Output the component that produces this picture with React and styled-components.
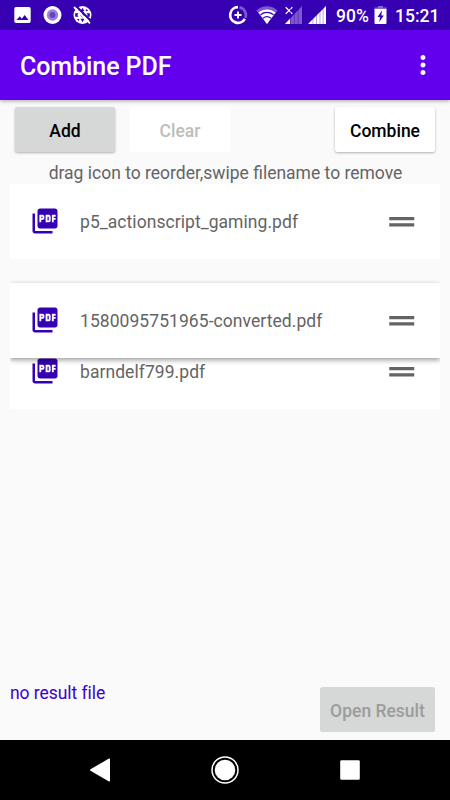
import React from 'react';
import styled, { createGlobalStyle } from 'styled-components';
import { MdPictureAsPdf, MdDragHandle, MdMoreVert } from 'react-icons/md';

const files = [
    { name: 'p5_actionscript_gaming.pdf' },
    { name: '1580095751965-converted.pdf', dragged: true },
    { name: 'barndelf799.pdf' },
];

const StatusBar = () => (
    <Status>
        <StatusIcon $gap={14} width="17" height="18" viewBox="0 0 17 18">
            <path fillRule="evenodd" d="M2 1h13a1.7 1.7 0 0 1 1.7 1.7v12.6A1.7 1.7 0 0 1 15 17H2A1.7 1.7 0 0 1 .3 15.3V2.7A1.7 1.7 0 0 1 2 1zM2.5 14h12l-3.8-5-2.9 3.7L5.8 10.3z" />
        </StatusIcon>
        <StatusIcon $gap={12} width="19" height="20" viewBox="0 0 19 20">
            <circle cx="9.5" cy="10" r="9" />
            <circle cx="9.5" cy="10" r="5.7" fill="#9a7fd8" />
            <circle cx="9.5" cy="10" r="2.9" fill="#6942c2" />
        </StatusIcon>
        <StatusIcon $gap={11} width="20" height="20" viewBox="0 0 20 20">
            <circle cx="9.5" cy="10" r="9" />
            <g fill="#3700b3">
                <path d="M9.5 2.8l2 3.4h-4zM9.5 17.2l2-3.4h-4zM9.5 7.5l2.3 2.5-2.3 2.5L7.2 10z" />
                <path d="M2.2 8.2h3.3L4.3 10l1.2 1.8H2.2zM16.8 8.2h-3.3l1.2 1.8-1.2 1.8h3.3z" />
                <path d="M13 3.8l2.2 2.2h-2.4zM6 3.8L3.8 6h2.4zM6 16.2L3.8 14h2.4z" />
            </g>
            <g fill="none">
                <path d="M2.5 .5L19.5 17.5" stroke="#3700b3" strokeWidth="2.2" />
                <path d="M1 2L17 18.3" stroke="#fff" strokeWidth="1.8" />
            </g>
        </StatusIcon>
        <Spacer />
        <StatusIcon width="20" height="20" viewBox="0 0 20 20">
            <g fill="none" stroke="#fff" strokeWidth="2.7">
                <path d="M10 2.2A7.8 7.8 0 1 0 16.8 13.8" />
                <path d="M11.5 2.3A7.8 7.8 0 0 1 17.3 12.8" opacity=".35" />
                <path d="M10 6.5v7M6.5 10h7" strokeWidth="1.9" />
            </g>
        </StatusIcon>
        <StatusIcon $gap={8} width="22" height="20" viewBox="0 0 22 20">
            <path d="M.3 5.5C6.3-.2 15.7-.2 21.7 5.5L11 19z" opacity=".35" />
            <path d="M2.5 7.6c5-4.2 12-4.2 17 0L11 19z" />
            <g fill="none" stroke="#3700b3" strokeWidth="1.3">
                <path d="M4.5 9.8c3.9-3.1 9.1-3.1 13 0M7 13.2c2.4-1.8 5.6-1.8 8 0" />
            </g>
        </StatusIcon>
        <StatusIcon $gap={7} width="18" height="20" viewBox="0 0 18 20">
            <path d="M0 19L17 1v18z" opacity=".35" />
            <path d="M0 19l5-5.3V19z" />
            <path d="M.7 2.3l6.6 6.6M7.3 2.3L.7 8.9" stroke="#fff" strokeWidth="1.3" />
            <path d="M5.5 1v18M9.3 1v18M13.1 1v18" stroke="#3700b3" strokeWidth=".7" opacity=".6" />
        </StatusIcon>
        <StatusIcon $gap={5} width="18" height="20" viewBox="0 0 18 20">
            <path d="M0 19L18 1v18z" />
            <path d="M5 8v11M8.5 4v15M12 2v17M15.1 1v18" stroke="#3700b3" strokeWidth=".6" opacity=".6" />
        </StatusIcon>
        <StatusText $gap={10} $width={38}>90%</StatusText>
        <StatusIcon width="13" height="20" viewBox="0 0 13 20">
            <path d="M4 1h5v1.5h3.5v2H.5v-2H4z" opacity=".4" />
            <path fillRule="evenodd" d="M.5 4h12v14a1 1 0 0 1-1 1h-10a1 1 0 0 1-1-1zM8 5.5L3.5 12H6l-.7 5 4.5-6.6H7.3z" />
        </StatusIcon>
        <StatusText $gap={8} $width={55}>15:21</StatusText>
    </Status>
);

const FileRow = ({ name, dragged }) => (
    <Row $dragged={dragged}>
        <MdPictureAsPdf className="pdf" />
        <span className="name">{name}</span>
        <MdDragHandle className="handle" />
    </Row>
);

const App = () => {
    return (
        <Screen>
            <GlobalStyle />
            <StatusBar />
            <AppBar>
                <h1>Combine PDF</h1>
                <MdMoreVert />
            </AppBar>
            <Content>
                <Toolbar>
                    <Button $variant="grey">Add</Button>
                    <Button $variant="flat" disabled>Clear</Button>
                    <Spacer />
                    <Button>Combine</Button>
                </Toolbar>
                <Hint>drag icon to reorder,swipe filename to remove</Hint>
                <List>
                    {files.map((file) => (
                        <FileRow key={file.name} {...file} />
                    ))}
                </List>
                <Footer>
                    <p>no result file</p>
                    <Button $variant="greyFlat" $width={115} disabled>Open Result</Button>
                </Footer>
            </Content>
            <NavBar>
                <svg width="20" height="24" viewBox="0 0 20 24">
                    <path d="M19 .5a.8.8 0 0 1 1 .8v21.4a.8.8 0 0 1-1 .8L.5 12.7a.8.8 0 0 1 0-1.4z" />
                </svg>
                <svg width="28" height="28" viewBox="0 0 28 28">
                    <circle cx="14" cy="14" r="13" fill="none" stroke="#fff" strokeWidth="1.5" />
                    <circle cx="14" cy="14" r="10.3" />
                </svg>
                <svg width="20" height="20" viewBox="0 0 20 20">
                    <rect x=".2" y=".2" width="19.6" height="19.6" rx="1.3" />
                </svg>
            </NavBar>
        </Screen>
    );
}

export default App;

const GlobalStyle = createGlobalStyle`
    * {
        box-sizing: border-box;
    }
    body {
        margin: 0;
        font-family: Roboto, sans-serif;
    }
    h1, p {
        margin: 0;
    }
`

const Screen = styled.div`
    display: flex;
    flex-direction: column;
    width: 450px;
    height: 800px;
    background: #fafafa;
    overflow: hidden;
`

const Status = styled.div`
    display: flex;
    align-items: center;
    flex: none;
    height: 30px;
    background: #3700b3;
`

const StatusIcon = styled.svg`
    flex: none;
    margin-left: ${({ $gap }) => $gap || 0}px;
    fill: #fff;
`

const StatusText = styled.span`
    flex: none;
    width: ${({ $width }) => $width}px;
    margin-left: ${({ $gap }) => $gap}px;
    padding-top: 2px;
    color: #fff;
    font-size: 17.5px;
    font-weight: 500;
    line-height: 28px;
    white-space: nowrap;
`

const Spacer = styled.div`
    flex: 1;
`

const AppBar = styled.header`
    display: flex;
    align-items: center;
    justify-content: space-between;
    flex: none;
    height: 70px;
    padding: 0 12.5px 0 20px;
    background: #6200ee;
    box-shadow: 0 1px 4px rgba(0, 0, 0, 0.35);
    color: #fff;
    h1 {
        font-size: 25px;
        font-weight: 500;
        letter-spacing: -0.08px;
        line-height: 30px;
        padding-top: 4px;
    }
    svg {
        width: 30px;
        height: 30px;
    }
`

const Content = styled.main`
    display: flex;
    flex-direction: column;
    flex: 1;
    padding: 7.4px 10px 8px;
`

const Toolbar = styled.div`
    display: flex;
    gap: 15px;
    padding: 0 5px;
`

const variants = {
    raised: 'background: #fff; color: #000; box-shadow: 0 1px 2.5px rgba(0, 0, 0, 0.3);',
    grey: 'background: #d6d7d7; color: #000; box-shadow: 0 1px 2.5px rgba(0, 0, 0, 0.3);',
    flat: 'background: #fff; color: #bdbdbd;',
    greyFlat: 'background: #d6d7d7; color: #9c9c9c;',
}

const Button = styled.button`
    width: ${({ $width }) => $width || 100}px;
    height: 45px;
    padding: 3px 0 0;
    border: 0;
    border-radius: 2.5px;
    font-family: inherit;
    font-size: 17.5px;
    font-weight: 500;
    white-space: nowrap;
    ${({ $variant }) => variants[$variant || 'raised']}
`

const Hint = styled.p`
    height: 24px;
    margin-top: 7.6px;
    padding-left: 1px;
    color: #646464;
    font-size: 17.5px;
    line-height: 27px;
    text-align: center;
    white-space: nowrap;
`

const List = styled.div`
    display: flex;
    flex-direction: column;
`

const Row = styled.div`
    display: flex;
    align-items: center;
    height: 75px;
    padding: 0 20px;
    background: #fff;
    color: #646464;
    font-size: 17.5px;
    ${({ $dragged }) => $dragged && `
        z-index: 1;
        transform: translateY(24px);
        box-shadow: 0 2px 5px rgba(0, 0, 0, 0.4);
        clip-path: inset(-3px 0 -8px 0);
    `}
    .pdf {
        width: 30px;
        height: 30px;
        margin-bottom: 1px;
        color: #3700b3;
    }
    .name {
        flex: 1;
        margin-left: 20px;
        padding-top: 2px;
        letter-spacing: 0.06px;
    }
    .handle {
        width: 37.5px;
        height: 37.5px;
    }
`

const Footer = styled.footer`
    display: flex;
    justify-content: space-between;
    margin-top: auto;
    padding-right: 5px;
    p {
        color: #3d00d0;
        font-size: 17.5px;
        line-height: 13px;
        letter-spacing: -0.05px;
    }
`

const NavBar = styled.nav`
    display: flex;
    align-items: center;
    justify-content: space-between;
    flex: none;
    height: 60px;
    padding: 0 90px;
    background: #000;
    fill: #fff;
`
